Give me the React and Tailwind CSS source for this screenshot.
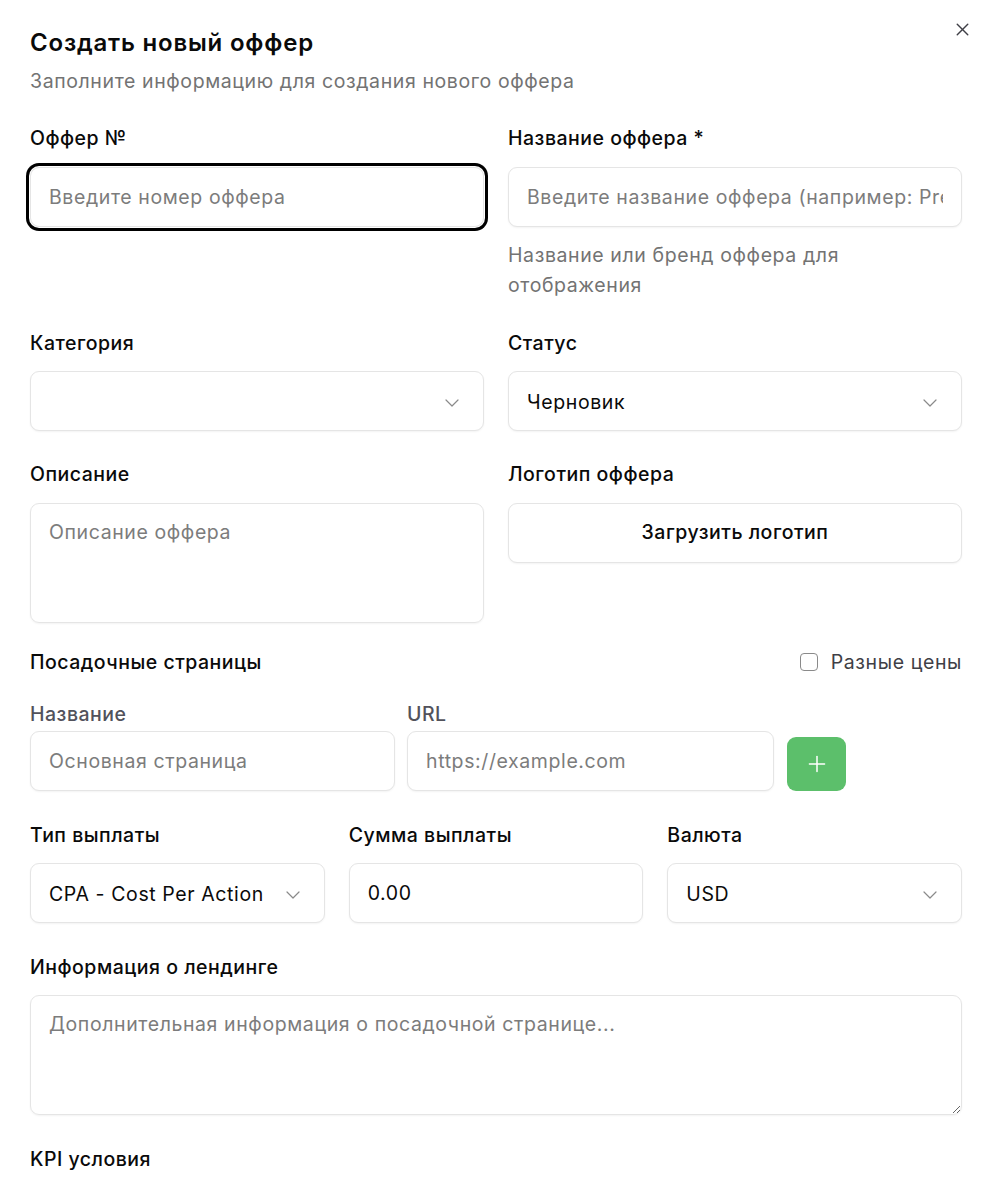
import { ChevronDown, Plus, X } from 'lucide-react'

const font = { fontFamily: 'Inter, "Noto Sans", sans-serif' }

const Label = ({ children, className = '' }) => (
  <div className={`text-[19.5px] leading-[28px] font-medium tracking-[0.5px] text-[#0a0a0a] ${className}`}>{children}</div>
)

const inputCls =
  'w-full h-[60px] rounded-[9px] border border-[#e5e5e5] bg-white px-[18px] text-[19.5px] tracking-[0.6px] text-[#0a0a0a] placeholder:text-[#7c7c7c] outline-none shadow-[0_1px_2px_rgba(0,0,0,0.05)]'

const Select = ({ value, className = '' }) => (
  <div className={`${inputCls} flex items-center justify-between pr-[19px] pt-[3px] ${className}`}>
    <span className="truncate">{value}</span>
    <ChevronDown className="w-[24px] h-[24px] text-[#8a8a8a] shrink-0" strokeWidth={1.2} />
  </div>
)

export default function App() {
  return (
    <div className="relative w-[992px] min-h-[1184px] bg-white px-[30px] pt-[29px] pb-10" style={font}>
      <button className="absolute right-[19px] top-[19px] text-[#3f3f46]" aria-label="Закрыть">
        <X className="w-[21px] h-[21px]" strokeWidth={1.6} />
      </button>

      <h2 className="text-[24px] leading-[28px] font-semibold tracking-[0.8px] text-[#0a0a0a]">Создать новый оффер</h2>
      <p className="mt-[10px] text-[19.5px] leading-[28px] tracking-[0.6px] text-[#737373]">
        Заполните информацию для создания нового оффера
      </p>

      <div className="mt-[29px] grid grid-cols-2 gap-x-[24px]">
        <div>
          <Label>Оффер №</Label>
          <input
            autoFocus
            className={`${inputCls} mt-[15px] ring-[3px] ring-black ring-offset-1`}
            placeholder="Введите номер оффера"
          />
        </div>
        <div>
          <Label>Название оффера *</Label>
          <input className={`${inputCls} mt-[15px]`} placeholder="Введите название оффера (например: Premium)" />
          <p className="mt-[13px] text-[19.5px] leading-[30px] tracking-[0.6px] text-[#737373]">
            Название или бренд оффера для отображения
          </p>
        </div>
      </div>

      <div className="mt-[29px] grid grid-cols-2 gap-x-[24px]">
        <div>
          <Label>Категория</Label>
          <Select value="" className="mt-[14px]" />
        </div>
        <div>
          <Label>Статус</Label>
          <Select value="Черновик" className="mt-[14px]" />
        </div>
      </div>

      <div className="mt-[29px] grid grid-cols-2 gap-x-[24px]">
        <div>
          <Label>Описание</Label>
          <textarea
            className="mt-[15px] block w-full h-[120px] rounded-[9px] border border-[#e5e5e5] px-[18px] py-[14px] text-[19.5px] leading-[28px] tracking-[0.6px] placeholder:text-[#7c7c7c] outline-none resize-none shadow-[0_1px_2px_rgba(0,0,0,0.05)]"
            placeholder="Описание оффера"
          />
        </div>
        <div>
          <Label>Логотип оффера</Label>
          <button className="mt-[15px] w-full h-[60px] rounded-[9px] border border-[#e5e5e5] bg-white text-[19.5px] tracking-[0.5px] font-medium text-[#0a0a0a] shadow-[0_1px_2px_rgba(0,0,0,0.05)]">
            Загрузить логотип
          </button>
        </div>
      </div>

      <div className="mt-[25px] flex items-center justify-between">
        <Label>Посадочные страницы</Label>
        <label className="flex items-center gap-[13px] text-[19.5px] leading-[28px] tracking-[0.6px] text-[#3f3f46]">
          <span className="w-[18px] h-[18px] rounded-[4px] border-[1.5px] border-[#8a8a8a] bg-white" />
          Разные цены
        </label>
      </div>

      <div className="mt-[28px] grid grid-cols-[365px_367px_59px] gap-x-[12px] items-end">
        <div>
          <div className="text-[19.5px] leading-[20px] font-medium tracking-[0.5px] text-[#52525b]">Название</div>
          <input className={`${inputCls} mt-[7px]`} placeholder="Основная страница" />
        </div>
        <div>
          <div className="text-[19.5px] leading-[20px] font-medium tracking-[0.5px] text-[#52525b]">URL</div>
          <input className={`${inputCls} mt-[7px]`} placeholder="https://example.com" />
        </div>
        <button className="ml-[1px] h-[54px] w-[59px] rounded-[9px] bg-[#5cbf6b] text-white flex items-center justify-center">
          <Plus className="w-[26px] h-[26px]" strokeWidth={1.4} />
        </button>
      </div>

      <div className="mt-[30px] grid grid-cols-3 gap-x-[24px]">
        <div>
          <Label>Тип выплаты</Label>
          <Select value="CPA - Cost Per Action" className="mt-[14px]" />
        </div>
        <div>
          <Label>Сумма выплаты</Label>
          <input className={`${inputCls} mt-[14px]`} defaultValue="0.00" />
        </div>
        <div>
          <Label>Валюта</Label>
          <Select value="USD" className="mt-[14px]" />
        </div>
      </div>

      <div className="mt-[30px]">
        <Label>Информация о лендинге</Label>
        <textarea
          className="mt-[14px] block w-full h-[120px] rounded-[9px] border border-[#e5e5e5] px-[18px] py-[14px] text-[19.5px] leading-[28px] tracking-[0.6px] placeholder:text-[#7c7c7c] outline-none shadow-[0_1px_2px_rgba(0,0,0,0.05)]"
          placeholder="Дополнительная информация о посадочной странице..."
        />
      </div>

      <Label className="mt-[30px]">KPI условия</Label>
    </div>
  )
}
